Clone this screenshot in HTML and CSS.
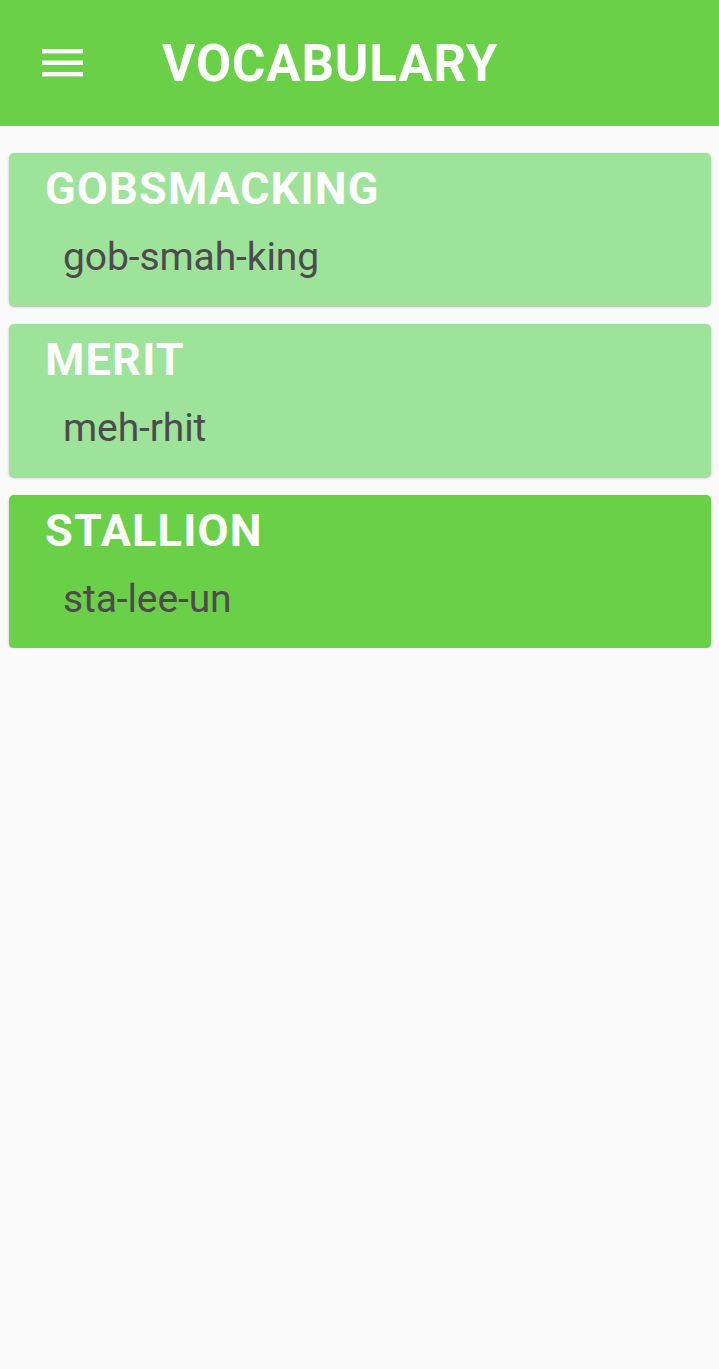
FILE: index.html
```html
<!DOCTYPE html>
<html>
<head>
<meta charset="utf-8">
<link rel="stylesheet" href="styles.css">
</head>
<body>
<header class="appbar">
  <svg class="menu" width="41" height="28" viewBox="0 0 41 28">
    <rect x="0" y="0" width="41" height="4.4" fill="#fff"/>
    <rect x="0" y="11.5" width="41" height="4.4" fill="#fff"/>
    <rect x="0" y="23" width="41" height="4.4" fill="#fff"/>
  </svg>
  <h1 class="title">VOCABULARY</h1>
</header>
<main class="list">
  <div class="card light">
    <div class="word">GOBSMACKING</div>
    <div class="pron">gob-smah-king</div>
  </div>
  <div class="card light">
    <div class="word">MERIT</div>
    <div class="pron">meh-rhit</div>
  </div>
  <div class="card dark">
    <div class="word">STALLION</div>
    <div class="pron">sta-lee-un</div>
  </div>
</main>
</body>
</html>
```
FILE: styles.css
```css
html, body {
  margin: 0;
  padding: 0;
  background: #fafafa;
  font-family: Roboto, "Noto Sans", sans-serif;
}
.appbar {
  height: 126px;
  background: #6ad047;
  display: flex;
  align-items: center;
  box-sizing: border-box;
  padding-left: 42px;
}
.menu {
  display: block;
}
.title {
  margin: 0 0 0 79px;
  color: #fff;
  font-size: 51px;
  font-weight: 700;
  letter-spacing: 0.9px;
  line-height: 1;
}
.list {
  display: flex;
  flex-direction: column;
  gap: 18px;
  padding: 27px 8px 0 9px;
}
.card {
  height: 153px;
  box-sizing: border-box;
  border-radius: 5px;
  box-shadow: 0 1px 3px rgba(0,0,0,0.2), 0 1px 1px rgba(0,0,0,0.1);
  padding: 10px 0 0 36px;
}
.light { background: #9de39a; }
.dark { background: #6ad047; }
.word {
  color: #fff;
  font-size: 45px;
  font-weight: 700;
  letter-spacing: 1.2px;
  line-height: 52px;
}
.pron {
  color: #4e4a4e;
  font-size: 39px;
  line-height: 44px;
  margin-top: 20px;
  padding-left: 18px;
  letter-spacing: -0.1px;
}
```
